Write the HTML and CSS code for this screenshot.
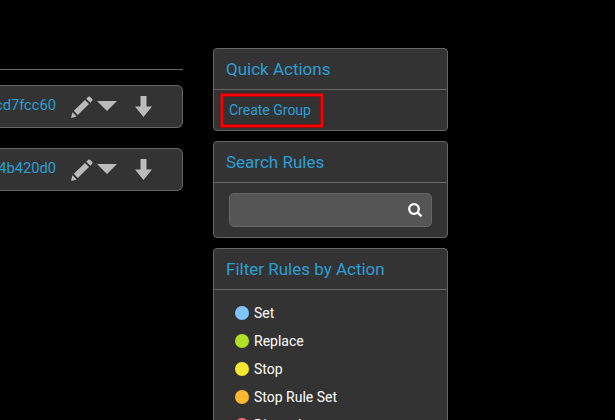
FILE: index.html
```
<!DOCTYPE html>
<html lang="en">
<head>
<meta charset="utf-8">
<title>Rules</title>
<link rel="stylesheet" href="styles.css">
</head>
<body>
<svg class="defs" aria-hidden="true">
  <symbol id="pencil" viewBox="0 0 22 22"><path d="M0 22 1.4 16.2 5.7 20.4ZM2.8 14.8 14 4 18 8 6.8 19ZM15.3 2.8 17.3.8Q18.2 0 19 .8L21.3 3Q22 3.8 21.3 4.6L19.3 6.7Z"/></symbol>
  <symbol id="caret" viewBox="0 0 20 10"><path d="M0 0H20L10 10Z"/></symbol>
  <symbol id="down" viewBox="0 0 17 21"><path d="M5.5 0H11.5V10.5H17L8.5 21 0 10.5H5.5Z"/></symbol>
</svg>
<div class="page">
  <main class="rules">
    <div class="rule"><a class="rule-id">cd7fcc60</a><svg class="pencil"><use href="#pencil"/></svg><svg class="caret"><use href="#caret"/></svg><svg class="down"><use href="#down"/></svg></div>
    <div class="rule"><a class="rule-id">4b420d0</a><svg class="pencil"><use href="#pencil"/></svg><svg class="caret"><use href="#caret"/></svg><svg class="down"><use href="#down"/></svg></div>
  </main>
  <aside class="sidebar">
    <section class="panel">
      <h2>Quick Actions</h2>
      <div class="actions"><a class="create">Create Group</a></div>
    </section>
    <section class="panel">
      <h2>Search Rules</h2>
      <div class="search-body"><div class="search"><svg class="glass" viewBox="0 0 15 15"><circle cx="6" cy="6" r="4.8"/><path d="M9.5 9.5 13.6 13.4"/></svg></div></div>
    </section>
    <section class="panel">
      <h2>Filter Rules by Action</h2>
      <ul class="filters">
        <li><i class="dot set"></i>Set</li>
        <li><i class="dot replace"></i>Replace</li>
        <li><i class="dot stop"></i>Stop</li>
        <li><i class="dot stop-set"></i>Stop Rule Set</li>
        <li><i class="dot discard"></i>Discard</li>
      </ul>
    </section>
  </aside>
</div>
</body>
</html>
```
FILE: styles.css
```
* { box-sizing: border-box; }
body {
  margin: 0;
  height: 420px;
  overflow: hidden;
  background: #000;
  color: #fff;
  font: 14px/20px Roboto, sans-serif;
}
.defs { display: none; }
.page { display: flex; gap: 30px; height: 420px; overflow: hidden; }
.rules {
  width: 183px;
  margin-top: 69px;
  padding-top: 15px;
  border-top: 1px solid #666;
}
.rule {
  display: flex;
  align-items: center;
  height: 43px;
  margin-bottom: 20px;
  border: 1px solid #666;
  border-left: 0;
  border-radius: 0 6px 6px 0;
  background: #333;
  fill: #bbb;
}
.rule-id {
  display: flex;
  justify-content: flex-end;
  width: 56px;
  margin-top: -3px;
  color: #2a9fd6;
  font-size: 14.7px;
}
.pencil { width: 22px; height: 22px; margin-left: 15px; }
.caret { width: 20px; height: 10px; margin: -1px 0 0 4px; }
.down { width: 17px; height: 21px; margin-left: 18px; }
.sidebar { width: 235px; margin-top: 48px; }
.panel {
  margin-bottom: 10px;
  border: 1px solid #666;
  border-radius: 4px;
  background: #333;
}
h2 {
  height: 41px;
  margin: 0;
  padding-left: 12px;
  border-bottom: 1px solid #666;
  color: #2a9fd6;
  font-size: 17px;
  font-weight: 400;
  line-height: 40px;
}
.actions { height: 40px; padding: 3px 6px; }
.create {
  display: block;
  width: 104px;
  height: 35px;
  padding: 3px 0 0 6px;
  border: 3px solid #f00;
  box-shadow: inset 0 0 0 1px #990f0f;
  outline: 1px solid #990f0f;
  outline-offset: -1px;
  line-height: 22px;
  color: #2a9fd6;
}
.search-body { height: 54px; padding: 10px 15px; }
.search {
  display: flex;
  align-items: center;
  justify-content: flex-end;
  height: 34px;
  padding-right: 8px;
  border: 1px solid #666;
  border-radius: 5px;
  background: #555;
}
.glass { width: 15px; height: 15px; fill: none; stroke: #fff; stroke-width: 2.3; }
.filters { margin: 0; padding: 9px 0 9px 21px; list-style: none; }
.filters li { display: flex; align-items: center; height: 28px; }
.dot { width: 14px; height: 14px; margin-right: 5px; border-radius: 50%; }
.set { background: #80c4ff; }
.replace { background: #b2e024; }
.stop { background: #f7e731; }
.stop-set { background: #ffb733; }
.discard { background: #f56b6b; }
```
